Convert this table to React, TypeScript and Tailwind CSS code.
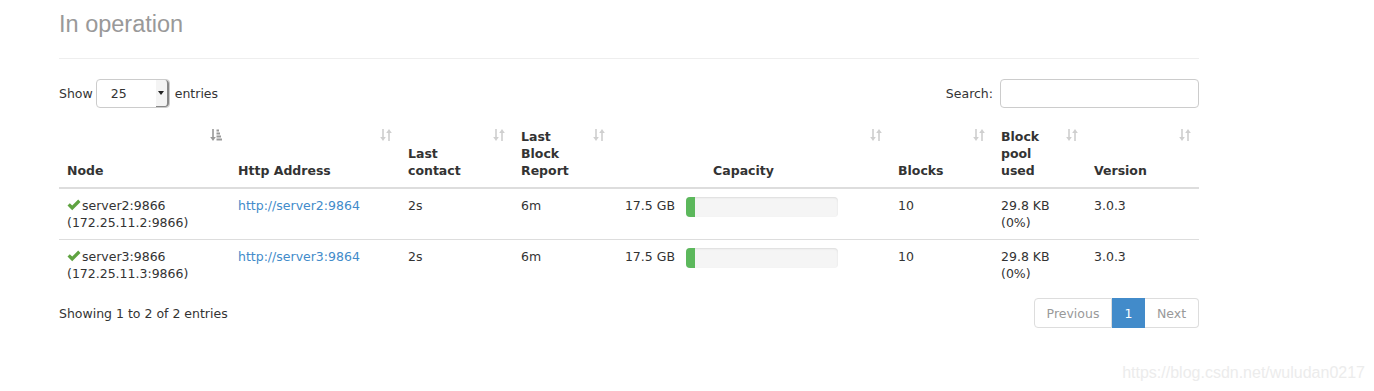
import React from 'react';

type Row = {
  node: string;
  ip: string;
  http: string;
  contact: string;
  report: string;
  capacity: string;
  used: number;
  blocks: string;
  pool: string;
  pct: string;
  version: string;
};

const rows: Row[] = [
  {
    node: 'server2:9866',
    ip: '(172.25.11.2:9866)',
    http: 'http://server2:9864',
    contact: '2s',
    report: '6m',
    capacity: '17.5 GB',
    used: 6,
    blocks: '10',
    pool: '29.8 KB',
    pct: '(0%)',
    version: '3.0.3',
  },
  {
    node: 'server3:9866',
    ip: '(172.25.11.3:9866)',
    http: 'http://server3:9864',
    contact: '2s',
    report: '6m',
    capacity: '17.5 GB',
    used: 6,
    blocks: '10',
    pool: '29.8 KB',
    pct: '(0%)',
    version: '3.0.3',
  },
];

function SortIcon() {
  return (
    <svg width="12" height="12" viewBox="0 0 12 12" className="absolute top-[9px] right-[8px]">
      <g fill="#cfcfcf">
        <rect x="2.2" y="0" width="1.6" height="8.5" />
        <polygon points="0.2,8 5.8,8 3,12" />
        <rect x="8.2" y="3.5" width="1.6" height="8.5" />
        <polygon points="6.2,4 11.8,4 9,0" />
      </g>
    </svg>
  );
}

function SortedIcon() {
  return (
    <svg width="12" height="12" viewBox="0 0 12 12" className="absolute top-[9px] right-[8px]">
      <g fill="#9a9a9a">
        <rect x="2.2" y="0" width="1.6" height="8.5" />
        <polygon points="0.2,8 5.8,8 3,12" />
        <rect x="6.5" y="0.5" width="2.5" height="2" />
        <rect x="6.5" y="3.5" width="3.5" height="2" />
        <rect x="6.5" y="6.5" width="4.5" height="2" />
        <rect x="6.5" y="9.5" width="5.5" height="2" />
      </g>
    </svg>
  );
}

function Check() {
  return (
    <svg width="14" height="12" viewBox="0 0 14 12" className="inline-block mr-[1px] -mt-[4px] align-middle">
      <path d="M0.5 6.5 L2.8 4.2 L5.2 6.6 L11.2 0.6 L13.5 2.9 L5.2 11.2 Z" fill="#5fa341" />
    </svg>
  );
}

const th = 'relative align-bottom text-left font-bold pl-[8px] pt-[8px] pb-[8px] border-b-2 border-[#ddd]';

export default function App() {
  return (
    <div className="relative min-h-[391px] bg-white text-[#333] text-[12.5px] leading-[17px]" style={{ fontFamily: '"DejaVu Sans", Verdana, sans-serif' }}>
      <div className="ml-[59px] w-[1140px]">
        <div className="h-[59px] border-b border-[#eee]">
          <h2 className="pt-[11px] text-[23.5px] leading-[26px] text-[#999]" style={{ fontFamily: '"Liberation Sans", Arial, sans-serif' }}>
            In operation
          </h2>
        </div>

        {/* controls */}
        <div className="mt-[20px] flex items-center justify-between h-[29px]">
          <div className="flex items-center">
            <span>Show</span>
            <div className="relative ml-[3px] w-[74px] h-[29px] border border-[#ccc] rounded-[4px] flex items-center pl-[14px] bg-white">
              <span>25</span>
              <div className="absolute right-0 top-0 bottom-0 w-[13px] border-r-2 border-b border-[#888] rounded-r-[4px] flex items-center justify-center bg-[#f4f4f4]">
                <div className="w-0 h-0 border-l-[3px] border-r-[3px] border-t-[4px] border-l-transparent border-r-transparent border-t-[#222]" />
              </div>
            </div>
            <span className="ml-[5px]">entries</span>
          </div>
          <div className="flex items-center">
            <span>Search:</span>
            <div className="ml-[7px] w-[199px] h-[29px] border border-[#ccc] rounded-[4px]" />
          </div>
        </div>

        {/* table */}
        <table className="mt-[12px] w-[1140px] table-fixed">
          <colgroup>
            <col className="w-[171px]" />
            <col className="w-[170px]" />
            <col className="w-[113px]" />
            <col className="w-[100px]" />
            <col className="w-[277px]" />
            <col className="w-[103px]" />
            <col className="w-[93px]" />
            <col className="w-[113px]" />
          </colgroup>
          <thead>
            <tr>
              <th className={th + ' pr-[30px]'}>Node<SortedIcon /></th>
              <th className={th + ' pr-[30px]'}>Http Address<SortIcon /></th>
              <th className={th + ' pr-[30px]'}>Last contact<SortIcon /></th>
              <th className={th + ' pr-[30px]'}>Last Block Report<SortIcon /></th>
              <th className={th + ' pr-[24px] !text-center'}>Capacity<SortIcon /></th>
              <th className={th + ' pr-[30px]'}>Blocks<SortIcon /></th>
              <th className={th + ' pr-[30px]'}>Block pool used<SortIcon /></th>
              <th className={th + ' pr-[30px]'}>Version<SortIcon /></th>
            </tr>
          </thead>
          <tbody>
            {rows.map((r, i) => {
              const td = 'align-top p-[8px] ' + (i > 0 ? 'border-t border-[#ddd]' : '');
              return (
                <tr key={r.node}>
                  <td className={td}>
                    <div><Check />{r.node}</div>
                    <div>{r.ip}</div>
                  </td>
                  <td className={td}>
                    <span className="text-[#428bca]">{r.http}</span>
                  </td>
                  <td className={td}>{r.contact}</td>
                  <td className={td}>{r.report}</td>
                  <td className={td}>
                    <div className="flex items-start">
                      <div className="w-[54px] text-right">{r.capacity}</div>
                      <div className="ml-[11px] w-[152px] h-[20px] rounded-[4px] bg-[#f5f5f5] shadow-[inset_0_1px_2px_rgba(0,0,0,0.1)] overflow-hidden">
                        <div className="h-full bg-[#5cb85c]" style={{ width: `${r.used}%` }} />
                      </div>
                    </div>
                  </td>
                  <td className={td}>{r.blocks}</td>
                  <td className={td}>
                    {r.pool}
                    <br />
                    {r.pct}
                  </td>
                  <td className={td}>{r.version}</td>
                </tr>
              );
            })}
          </tbody>
        </table>

        {/* footer */}
        <div className="mt-[8px] flex items-center justify-between">
          <div>Showing 1 to 2 of 2 entries</div>
          <div className="flex h-[30px]">
            <div className="w-[78px] flex items-center justify-center border border-[#ddd] rounded-l-[4px] text-[#999]">Previous</div>
            <div className="w-[33px] flex items-center justify-center bg-[#428bca] border border-[#428bca] text-white">1</div>
            <div className="w-[54px] flex items-center justify-center border border-l-0 border-[#ddd] rounded-r-[4px] text-[#999]">Next</div>
          </div>
        </div>
      </div>

      <div className="absolute right-[9px] top-[362px] text-[16px] leading-[22px] text-[#ececec]" style={{ fontFamily: '"Liberation Sans", Arial, sans-serif' }}>
        https://blog.csdn.net/wuludan0217
      </div>
    </div>
  );
}
